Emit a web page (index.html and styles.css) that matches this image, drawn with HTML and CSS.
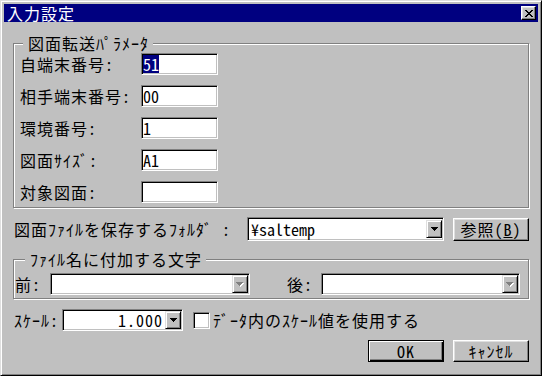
FILE: index.html
```html
<!DOCTYPE html>
<html lang="ja">
<head>
    <meta charset="UTF-8">
    <title>入力設定</title>
    <link rel="stylesheet" href="styles.css">
</head>
<body>
    <div class="window">
        <div class="titlebar">
            <span class="title">入力設定</span>
            <button class="close" type="button" aria-label="閉じる">
                <svg width="8" height="7" viewBox="0 0 8 7" shape-rendering="crispEdges">
                    <path d="M0 0h2v1h-2zM6 0h2v1h-2zM1 1h2v1h-2zM5 1h2v1h-2zM2 2h4v1h-4zM3 3h2v1h-2zM2 4h4v1h-4zM1 5h2v1h-2zM5 5h2v1h-2zM0 6h2v1h-2zM6 6h2v1h-2z"/>
                </svg>
            </button>
        </div>

        <div class="content">
            <fieldset class="group group-params">
                <legend>図面転送ﾊﾟﾗﾒｰﾀ</legend>
                <div class="params">
                    <label>自端末番号:</label>
                    <div class="field"><span class="value selected">51</span></div>

                    <label>相手端末番号:</label>
                    <div class="field"><span class="value">00</span></div>

                    <label>環境番号:</label>
                    <div class="field"><span class="value">1</span></div>

                    <label>図面ｻｲｽﾞ:</label>
                    <div class="field"><span class="value">A1</span></div>

                    <label>対象図面:</label>
                    <div class="field"><span class="value"></span></div>
                </div>
            </fieldset>

            <div class="row folder-row">
                <label class="folder-label">図面ﾌｧｲﾙを保存するﾌｫﾙﾀﾞ :</label>
                <div class="field combo folder-combo">
                    <span class="combo-text">¥saltemp</span>
                    <span class="drop">
                        <svg width="7" height="4" viewBox="0 0 7 4" shape-rendering="crispEdges"><path d="M0 0h7v1h-1v1h-1v1h-1v1h-1v-1h-1v-1h-1v-1h-1z"/></svg>
                    </span>
                </div>
                <button class="btn browse" type="button">参照(<u>B</u>)</button>
            </div>

            <fieldset class="group group-affix">
                <legend>ﾌｧｲﾙ名に付加する文字</legend>
                <div class="affix-row">
                    <label class="affix-label">前:</label>
                    <div class="field combo affix-combo">
                        <span class="combo-text"></span>
                        <span class="drop disabled">
                            <svg width="8" height="5" viewBox="0 0 8 5" shape-rendering="crispEdges"><path class="hl" d="M1 1h7v1h-1v1h-1v1h-1v1h-1v-1h-1v-1h-1v-1h-1z"/><path class="sh" d="M0 0h7v1h-1v1h-1v1h-1v1h-1v-1h-1v-1h-1v-1h-1z"/></svg>
                        </span>
                    </div>
                    <label class="affix-label after">後:</label>
                    <div class="field combo affix-combo last">
                        <span class="combo-text"></span>
                        <span class="drop disabled">
                            <svg width="8" height="5" viewBox="0 0 8 5" shape-rendering="crispEdges"><path class="hl" d="M1 1h7v1h-1v1h-1v1h-1v1h-1v-1h-1v-1h-1v-1h-1z"/><path class="sh" d="M0 0h7v1h-1v1h-1v1h-1v1h-1v-1h-1v-1h-1v-1h-1z"/></svg>
                        </span>
                    </div>
                </div>
            </fieldset>

            <div class="row scale-row">
                <label class="scale-label">ｽｹｰﾙ:</label>
                <div class="field combo scale-combo">
                    <span class="combo-text num">1.000</span>
                    <span class="drop">
                        <svg width="7" height="4" viewBox="0 0 7 4" shape-rendering="crispEdges"><path d="M0 0h7v1h-1v1h-1v1h-1v1h-1v-1h-1v-1h-1v-1h-1z"/></svg>
                    </span>
                </div>
                <span class="check"></span>
                <label class="check-label">ﾃﾞｰﾀ内のｽｹｰﾙ値を使用する</label>
            </div>

            <div class="row button-row">
                <button class="btn default" type="button">OK</button>
                <button class="btn" type="button">ｷｬﾝｾﾙ</button>
            </div>
        </div>
    </div>
</body>
</html>
```

FILE: styles.css
```css
* {
    box-sizing: border-box;
}

body {
    margin: 0;
    background-color: #c0c0c0;
    font-family: "Noto Sans Mono CJK JP", "Noto Sans CJK JP", sans-serif;
    font-size: 16px;
    line-height: 18px;
    letter-spacing: 1px;
    color: #000;
}

.window {
    width: 542px;
    height: 376px;
    padding: 3px;
    background-color: #c0c0c0;
    border: 1px solid;
    border-color: #dfdfdf #000 #000 #dfdfdf;
    box-shadow: inset 1px 1px #fff, inset -1px -1px #808080;
}

/* title bar */
.titlebar {
    height: 18px;
    display: flex;
    align-items: center;
    justify-content: space-between;
    padding: 0 2px 0 3px;
    background-color: #000080;
    color: #fff;
}

.close {
    width: 15px;
    height: 14px;
    padding: 0;
    display: flex;
    align-items: center;
    justify-content: center;
    background-color: #c0c0c0;
    border: 1px solid;
    border-color: #fff #000 #000 #fff;
    box-shadow: inset -1px -1px #808080, inset 1px 1px #dfdfdf;
}

.content {
    padding: 0 9px;
}

/* group boxes */
.group {
    margin: 0;
    min-width: 0;
    border: 1px solid #808080;
    box-shadow: inset 1px 1px #fff, 1px 1px #fff;
}

.group legend {
    background-color: #c0c0c0;
    padding: 0 4px 0 5px;
    line-height: 16px;
}

.group-params {
    margin-top: 13px;
    padding: 2px 6px 4px 6px;
}

.group-params legend {
    margin-left: 3px;
}

.params {
    display: grid;
    grid-template-columns: 121px 77px;
    grid-auto-rows: 22px;
    row-gap: 10px;
    align-items: center;
}

/* sunken fields */
.field {
    height: 22px;
    padding: 1px;
    display: flex;
    align-items: center;
    background-color: #fff;
    border: 1px solid;
    border-color: #808080 #fff #fff #808080;
    box-shadow: inset 1px 1px #000, inset -1px -1px #c0c0c0;
    letter-spacing: 0;
}

.value.selected {
    background-color: #000080;
    color: #fff;
}

.combo-text {
    flex: 1;
    padding-left: 2px;
    white-space: nowrap;
}

.combo-text.num {
    text-align: right;
    padding-right: 2px;
    letter-spacing: 1px;
}

.drop {
    width: 16px;
    height: 18px;
    flex: none;
    display: flex;
    align-items: center;
    justify-content: center;
    background-color: #c0c0c0;
    border: 1px solid;
    border-color: #dfdfdf #000 #000 #dfdfdf;
    box-shadow: inset 1px 1px #fff, inset -1px -1px #808080;
}

.drop svg {
    fill: #000;
}

.drop.disabled .hl {
    fill: #fff;
}

.drop.disabled .sh {
    fill: #808080;
}

/* rows */
.row {
    display: flex;
    align-items: center;
}

.folder-row {
    height: 24px;
    margin-top: 9px;
    padding-left: 1px;
}

.folder-label {
    width: 233px;
    white-space: nowrap;
}

.folder-combo {
    width: 197px;
    height: 24px;
}

.btn {
    height: 23px;
    width: 76px;
    padding: 0;
    font: inherit;
    letter-spacing: 1px;
    color: #000;
    background-color: #c0c0c0;
    border: 1px solid;
    border-color: #fff #000 #000 #fff;
    box-shadow: inset -1px -1px #808080, inset 1px 1px #dfdfdf;
}

.btn u {
    text-decoration-thickness: 1px;
    text-underline-offset: 1px;
}

.browse {
    margin-left: 9px;
}

.btn.default {
    border-color: #000;
    box-shadow: inset 1px 1px #fff, inset -1px -1px #000, inset -2px -2px #808080;
}

.group-affix {
    margin-top: 10px;
    padding: 6px 8px 3px 1px;
}

.group-affix legend {
    margin-left: 10px;
}

.affix-row {
    display: flex;
    align-items: center;
}

.affix-label {
    width: 35px;
}

.affix-label.after {
    width: 34px;
    margin-left: 37px;
}

.affix-combo {
    width: 200px;
}

.affix-combo.last {
    width: 199px;
}

.scale-row {
    height: 22px;
    margin-top: 10px;
    padding-left: 1px;
}

.scale-label {
    width: 48px;
}

.scale-combo {
    width: 121px;
}

.check {
    width: 17px;
    height: 17px;
    margin-left: 10px;
    background-color: #fff;
    border: 1px solid;
    border-color: #808080 #fff #fff #808080;
    box-shadow: inset 1px 1px #000, inset -1px -1px #c0c0c0;
}

.check-label {
    margin-left: 3px;
    white-space: nowrap;
}

.button-row {
    margin-top: 9px;
    justify-content: flex-end;
    gap: 9px;
}

.button-row .btn {
    height: 22px;
}
```
